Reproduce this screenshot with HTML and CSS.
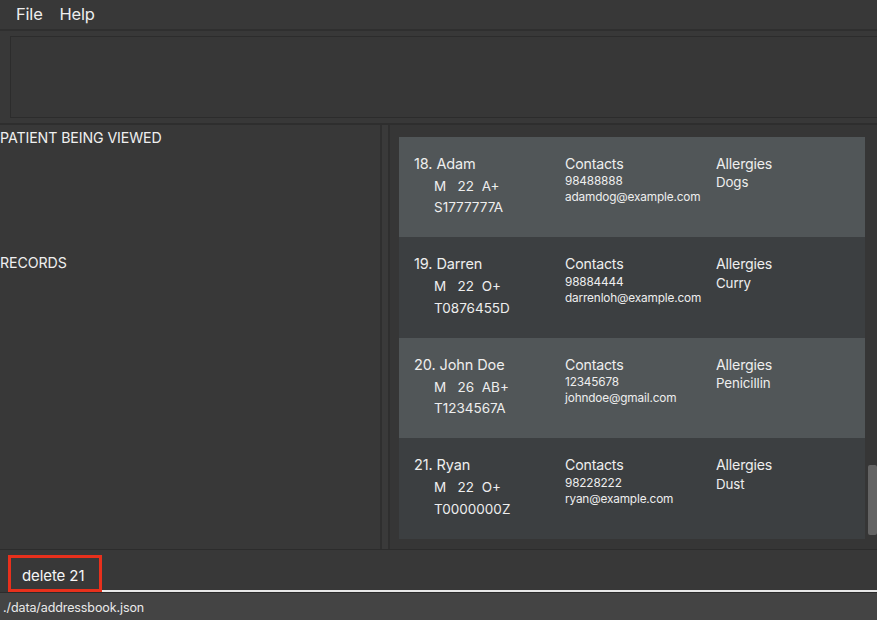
FILE: index.html
```html
<!DOCTYPE html>
<html>
<head>
<meta charset="utf-8">
<link rel="stylesheet" href="styles.css">
</head>
<body>
<div class="app">
  <div class="menubar">
    <span class="menu">File</span>
    <span class="menu">Help</span>
  </div>
  <div class="result-wrap">
    <div class="result"></div>
  </div>
  <div class="main">
    <div class="left">
      <div class="section viewed">PATIENT BEING VIEWED</div>
      <div class="section">RECORDS</div>
    </div>
    <div class="divider"></div>
    <div class="listpane">
      <div class="list">
        <div class="card odd">
          <div class="col id">
            <div class="name">18. Adam</div>
            <div class="sub">M&nbsp;&nbsp;&nbsp;22&nbsp;&nbsp;A+</div>
            <div class="sub nric">S1777777A</div>
          </div>
          <div class="col contacts">
            <div class="head">Contacts</div>
            <div class="small">98488888</div>
            <div class="small">adamdog@example.com</div>
          </div>
          <div class="col allergies">
            <div class="head">Allergies</div>
            <div class="val">Dogs</div>
          </div>
        </div>
        <div class="card even">
          <div class="col id">
            <div class="name">19. Darren</div>
            <div class="sub">M&nbsp;&nbsp;&nbsp;22&nbsp;&nbsp;O+</div>
            <div class="sub nric">T0876455D</div>
          </div>
          <div class="col contacts">
            <div class="head">Contacts</div>
            <div class="small">98884444</div>
            <div class="small">darrenloh@example.com</div>
          </div>
          <div class="col allergies">
            <div class="head">Allergies</div>
            <div class="val">Curry</div>
          </div>
        </div>
        <div class="card odd">
          <div class="col id">
            <div class="name">20. John Doe</div>
            <div class="sub">M&nbsp;&nbsp;&nbsp;26&nbsp;&nbsp;AB+</div>
            <div class="sub nric">T1234567A</div>
          </div>
          <div class="col contacts">
            <div class="head">Contacts</div>
            <div class="small">12345678</div>
            <div class="small">johndoe@gmail.com</div>
          </div>
          <div class="col allergies">
            <div class="head">Allergies</div>
            <div class="val">Penicillin</div>
          </div>
        </div>
        <div class="card even">
          <div class="col id">
            <div class="name">21. Ryan</div>
            <div class="sub">M&nbsp;&nbsp;&nbsp;22&nbsp;&nbsp;O+</div>
            <div class="sub nric">T0000000Z</div>
          </div>
          <div class="col contacts">
            <div class="head">Contacts</div>
            <div class="small">98228222</div>
            <div class="small">ryan@example.com</div>
          </div>
          <div class="col allergies">
            <div class="head">Allergies</div>
            <div class="val">Dust</div>
          </div>
        </div>
      </div>
      <div class="scrollbar"><div class="thumb"></div></div>
    </div>
  </div>
  <div class="command">
    <div class="cmdbox">delete 21</div>
    <div class="cmdline"></div>
  </div>
  <div class="status">./data/addressbook.json</div>
</div>
</body>
</html>
```
FILE: styles.css
```css
* { box-sizing: border-box; }
html, body {
  margin: 0;
  padding: 0;
  background: #383838;
  font-family: Inter, "Liberation Sans", sans-serif;
  color: #eeeeee;
}
.app {
  width: 877px;
  height: 620px;
  display: flex;
  flex-direction: column;
  overflow: hidden;
}
.menubar {
  height: 31px;
  display: flex;
  align-items: center;
  gap: 17px;
  padding-left: 16px;
  font-size: 16.5px;
  letter-spacing: -0.2px;
  border-bottom: 2px solid #2f2f2f;
}
.result-wrap {
  height: 94px;
  padding: 5px 0 5px 10px;
  border-bottom: 2px solid #2e2e2e;
}
.result {
  height: 100%;
  border: 1px solid #2c2c2c;
  border-right: none;
  background: #373737;
}
.main {
  height: 426px;
  display: flex;
  border-bottom: 1px solid #2c2c2c;
}
.left {
  width: 380px;
  display: flex;
  flex-direction: column;
}
.section {
  font-size: 14.2px;
  letter-spacing: -0.1px;
  color: #f0f0f0;
  padding-top: 4px;
  height: 125px;
}
.divider {
  width: 10px;
  border-left: 2px solid #2f2f2f;
  border-right: 2px solid #2f2f2f;
  background: #3a3a3a;
}
.listpane {
  flex: 1;
  display: flex;
  padding: 12px 0 10px 9px;
  background: #363636;
}
.list {
  width: 466px;
  display: flex;
  flex-direction: column;
}
.card {
  height: 100.5px;
  display: flex;
  padding: 18px 0 0 15px;
}
.card.odd { background: #515658; }
.card.even { background: #3c3f41; }
.col { display: flex; flex-direction: column; }
.col.id { width: 151px; }
.col.contacts { width: 151px; }
.name { font-size: 14.5px; height: 23px; letter-spacing: -0.1px; }
.sub { font-size: 13.5px; padding-left: 20px; height: 21.5px; }
.head { font-size: 14.2px; height: 19.5px; letter-spacing: -0.2px; }
.small { font-size: 11.8px; height: 16px; letter-spacing: -0.15px; }
.val { font-size: 13.3px; letter-spacing: -0.1px; }
.scrollbar {
  width: 12px;
  padding: 328px 0 4px 3px;
}
.thumb {
  height: 70px;
  background: #646464;
  border-radius: 2px;
}
.command {
  height: 42px;
  display: flex;
  align-items: flex-end;
}
.cmdbox {
  margin-left: 8px;
  width: 94px;
  height: 37px;
  border: 3px solid #e8301c;
  padding: 8px 0 0 11px;
  font-size: 15px;
  letter-spacing: -0.1px;
  color: #f5f5f5;
  background: #383838;
}
.cmdline {
  flex: 1;
  height: 2px;
  background: #e8e8e8;
}
.status {
  height: 28px;
  background: #444444;
  border-top: 1px solid #2c2c2c;
  font-size: 12.5px;
  letter-spacing: -0.1px;
  padding: 7px 0 0 3px;
  color: #eaeaea;
}
```
